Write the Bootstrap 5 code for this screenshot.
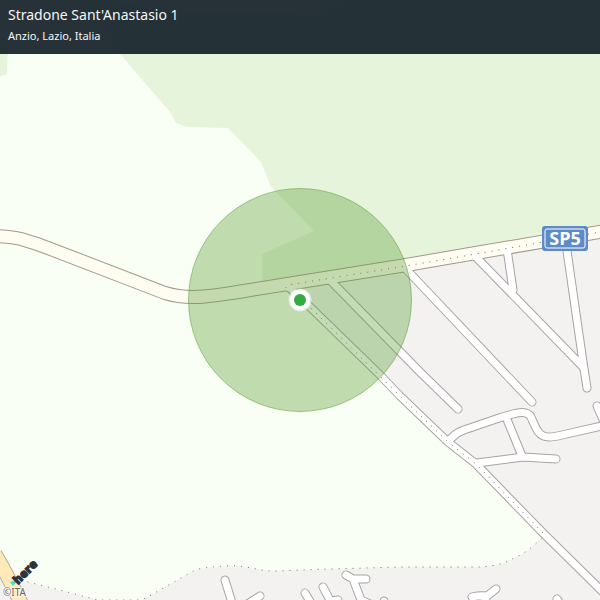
<!DOCTYPE html>
<html lang="it">
<head>
<meta charset="utf-8">
<meta name="viewport" content="width=device-width, initial-scale=1">
<title>Stradone Sant'Anastasio 1</title>
<link rel="stylesheet" href="https://cdn.jsdelivr.net/npm/bootstrap@5.3.0/dist/css/bootstrap.min.css">
<style>
body { font-family: "Noto Sans", "Open Sans", sans-serif; background: #f9fff5; }
.place-bar { background: rgba(17, 30, 37, .91); color: #f4f6f7; padding: 6px 8px 11px; }
.place-name { font-size: 14px; line-height: 18px; }
.place-area { font-size: 11px; line-height: 14px; margin-top: 5px; }
.casing { stroke: #a8a4a3; stroke-width: 9; }
.surface { stroke: #fff; stroke-width: 7; }
.dots { fill: none; stroke: #6c6c65; stroke-width: 1; stroke-dasharray: 1 6; }
.sign { font: bold 18px "Open Sans", "Noto Sans", sans-serif; fill: #fff; }
.logo-text { font: 800 12px "Open Sans", "Noto Sans", sans-serif; fill: #2b3238; stroke: #2b3238; stroke-width: 1; paint-order: stroke; }
.credit { font: 10px "Noto Sans", sans-serif; fill: #666; stroke: #fff; stroke-width: 2; stroke-opacity: .7; paint-order: stroke; }
</style>
</head>
<body>
<main class="position-relative">
<header class="place-bar position-absolute top-0 start-0 w-100">
<h1 class="place-name fw-normal mb-0">Stradone Sant'Anastasio 1</h1>
<p class="place-area mb-0">Anzio, Lazio, Italia</p>
</header>
<svg class="d-block w-100" viewBox="0 0 600 600" role="img" aria-label="Mappa di Stradone Sant'Anastasio">
<defs>
<g id="streets" fill="none" stroke-linecap="round" stroke-linejoin="round">
<path d="M287 286L309 306L379 374L400 396L448 442L476 464L543 533L606 595"/>
<path d="M330 280L420 372L458 409"/>
<path d="M404 267L532 402"/>
<path d="M475 256L583 367"/>
<path d="M507 249L513 290"/>
<path d="M566 244L583 362L587 388"/>
<path d="M448 441L456 434Q459 432 464 430L502 417L513 414Q527 410 531 417C536 428 538 437 549 437Q554 437 562 435L606 425"/>
<path d="M477 463L523 457L556 459"/>
<path d="M506 417L522 456"/>
<path d="M597 406L604 422"/>
<path d="M225 580L233 606"/>
<path d="M260 596L243 607"/>
<path d="M305 593L314 608"/>
<path d="M323 587L333 606M331 601L338 600"/>
<path d="M346 575L353 579L366 579M353 579L361 600L370 604"/>
<path d="M384 601L382 608"/>
<path d="M472 597Q480 595 487 596L496 589M487 596L482 606"/>
<path d="M557 599L563 608"/>
</g>
<path id="province-road" fill="none" d="M-5 236Q12 237 21 239Q35 243 48 248L165 293Q178 297 193 297Q210 297 250 290L300 282L400 266L470 254L605 231"/>
<radialGradient id="halo"><stop offset=".65" stop-color="#fff"/><stop offset=".85" stop-color="#fff" stop-opacity=".8"/><stop offset="1" stop-color="#fff" stop-opacity="0"/></radialGradient>
</defs>
<rect width="600" height="600" fill="#f9fff5"/>
<path fill="#e7f4dc" d="M600 0H345L312 15L290 12L200 13L160 12L110 0H75L120 54L170 112L176 123L187 127L228 128L261 162L271 187L314 231L262 254V287L600 233ZM0 48H8L7 74L0 76Z"/>
<path fill="#f3f2f1" d="M288 284L400 396L449 444L474 463L543 537Q527 553 512 559Q498 567 475 567L400 567L330 569L275 571C255 571 245 564 225 566Q205 567 195 570L160 590L142 600H98L48 587L20 580L0 577V600H600V232Z"/>
<path class="dots" d="M0 577L20 580L48 587L98 600H142L160 590L195 570Q205 567 225 566C245 564 255 571 275 571L330 569L400 567L475 567Q498 567 512 559Q527 553 543 537"/>
<path d="M-5 554Q8 576 23 607" fill="none" stroke="#b9ac93" stroke-width="15"/>
<path d="M-5 554Q8 576 23 607" fill="none" stroke="#ffe9b8" stroke-width="13"/>
<use href="#streets" class="casing"/>
<use href="#province-road" stroke="#a19a8c" stroke-width="14"/>
<use href="#province-road" stroke="#fffcf2" stroke-width="12"/>
<use href="#streets" class="surface"/>
<path class="dots" d="M543 533L476 464L448 442L400 396L309 306L285 289L288 285L400 267L470 255L600 232"/>
<rect x="542" y="226" width="46" height="25" rx="3" fill="#5c8bc8"/>
<rect x="545" y="229" width="40" height="19" rx="2" fill="none" stroke="#fff" stroke-width="1"/>
<text class="sign" x="565" y="245" text-anchor="middle">SP5</text>
<circle cx="300" cy="300" r="111.500" fill="#5c9f34" fill-opacity=".36" stroke="#5d9d3d" stroke-opacity=".55"/>
<circle cx="300" cy="300" r="12" fill="url(#halo)"/>
<circle cx="300" cy="300" r="6" fill="#32ab43"/>
<path d="M10 582L18 580L13 586Z" fill="#48dad0"/>
<text class="logo-text" transform="translate(18 585) rotate(-45)">here</text>
<text class="credit" x="3" y="596">©ITA</text>
</svg>
</main>
<script src="https://cdn.jsdelivr.net/npm/bootstrap@5.3.0/dist/js/bootstrap.bundle.min.js"></script>
</body>
</html>
